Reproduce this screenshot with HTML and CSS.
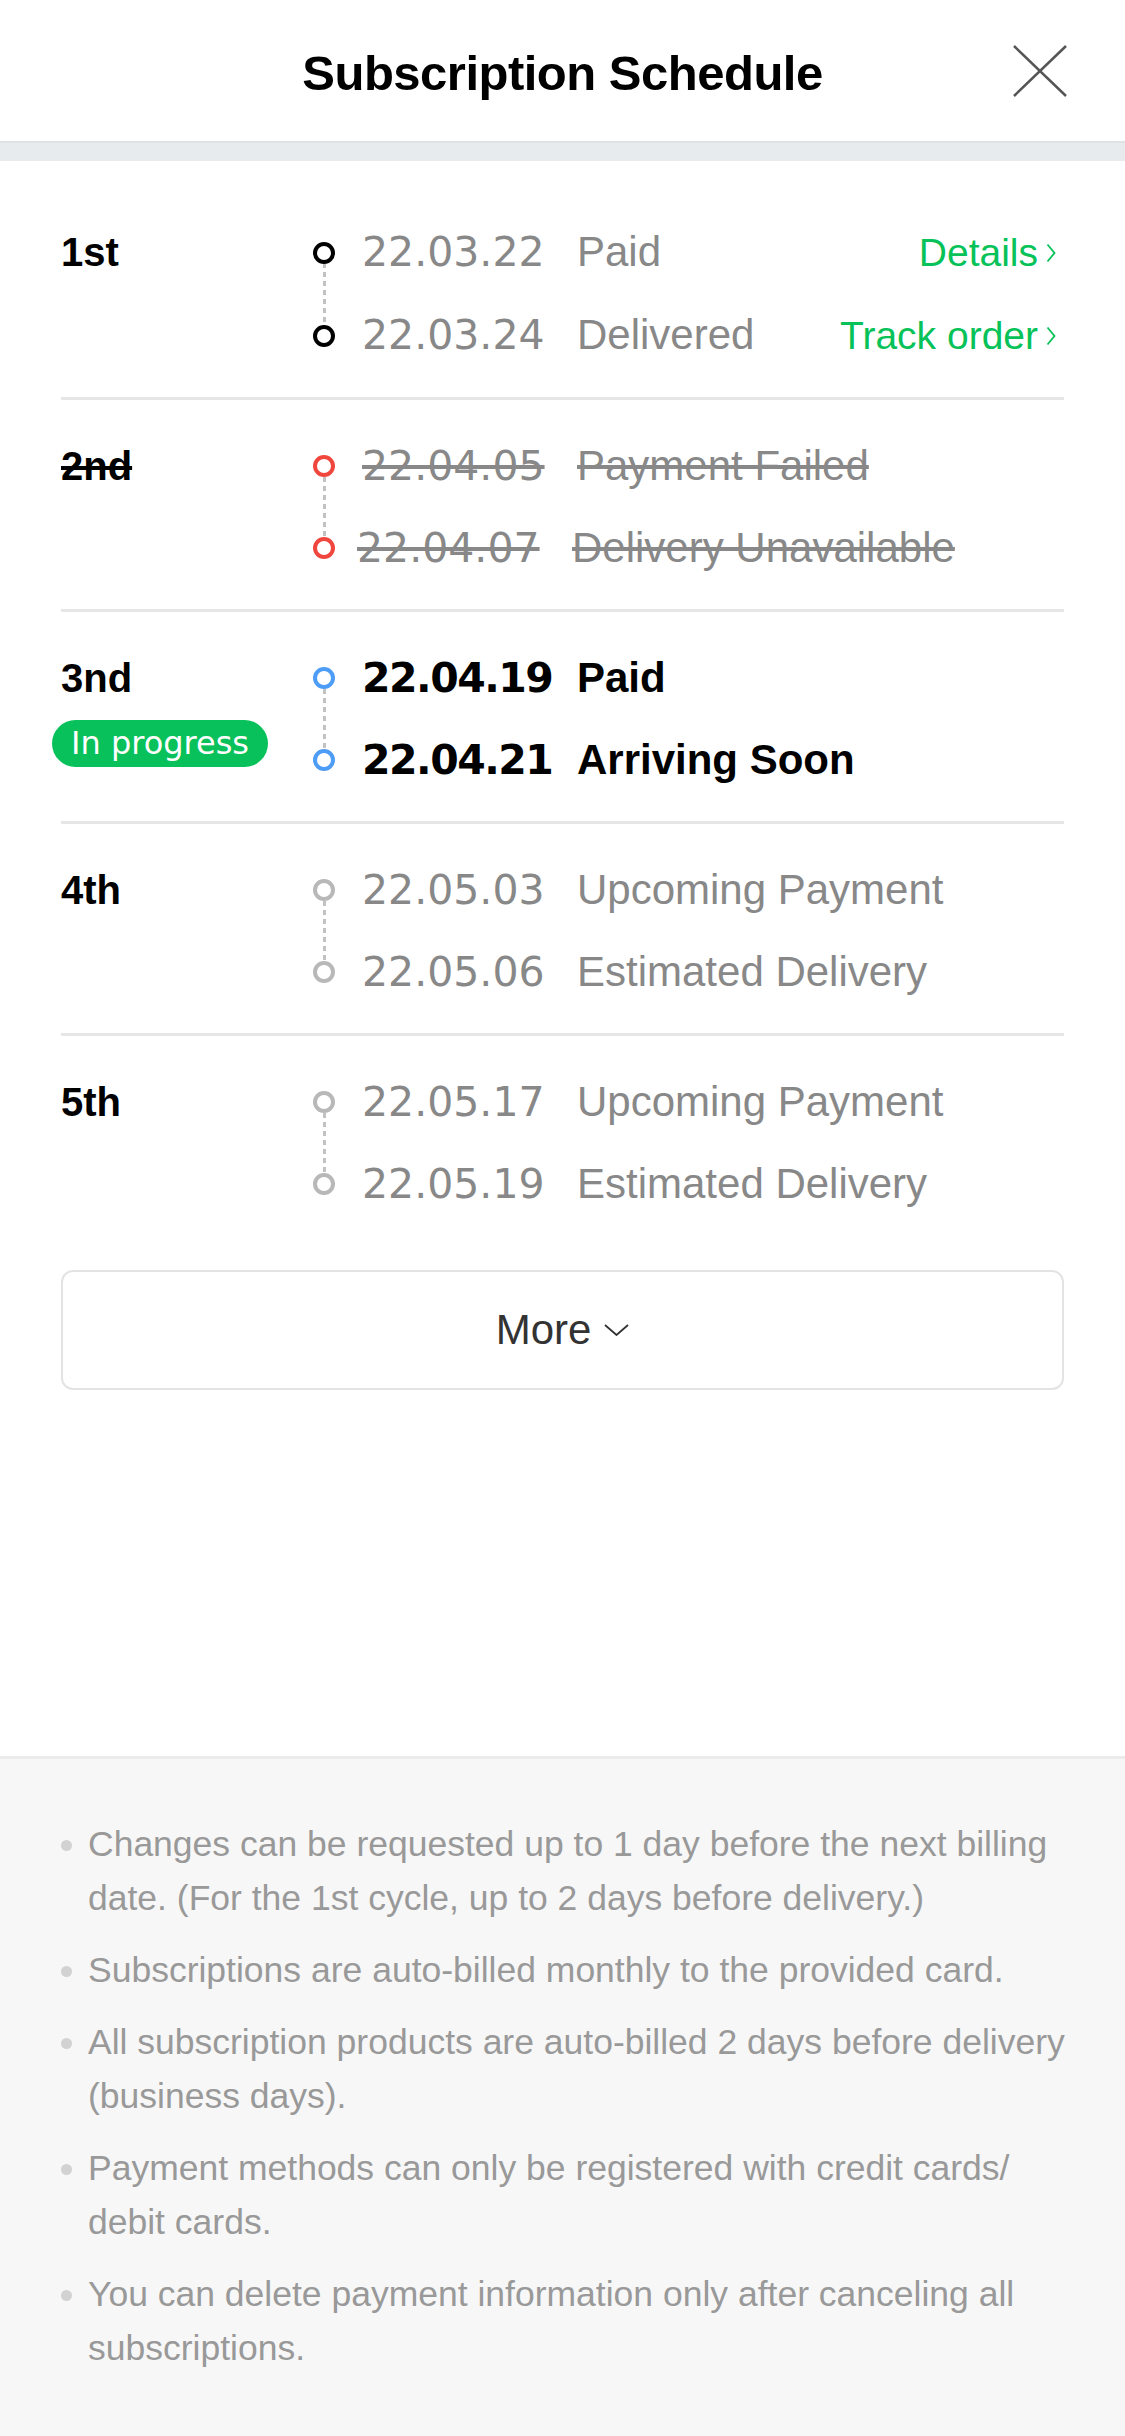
FILE: index.html
```html
<!DOCTYPE html>
<html lang="en">
<head>
    <meta charset="UTF-8">
    <meta name="viewport" content="width=device-width, initial-scale=1.0">
    <title>Subscription Schedule</title>
    <link rel="stylesheet" href="styles.css">
</head>
<body>

<header class="sheet-header">
    <h1>Subscription Schedule</h1>
    <button class="close" aria-label="Close">
        <svg width="54" height="52" viewBox="0 0 54 52"><path d="M1 1 L53 51 M53 1 L1 51" stroke="#555" stroke-width="2.5" fill="none"/></svg>
    </button>
</header>
<div class="band"></div>

<main class="schedule">
    <div class="cycle done">
        <div class="cycle-label">1st</div>
        <div class="timeline">
            <div class="step">
                <span class="dot"></span>
                <span class="date">22.03.22</span>
                <span class="status">Paid</span>
                <a class="link" href="#">Details<svg width="10" height="20" viewBox="0 0 10 20"><path d="M1.5 1.5 L8.5 10 L1.5 18.5" stroke="#06c258" stroke-width="1.8" fill="none"/></svg></a>
            </div>
            <div class="step">
                <span class="dot"></span>
                <span class="date">22.03.24</span>
                <span class="status">Delivered</span>
                <a class="link" href="#">Track order<svg width="10" height="20" viewBox="0 0 10 20"><path d="M1.5 1.5 L8.5 10 L1.5 18.5" stroke="#06c258" stroke-width="1.8" fill="none"/></svg></a>
            </div>
        </div>
    </div>

    <div class="cycle failed">
        <div class="cycle-label">2nd</div>
        <div class="timeline">
            <div class="step">
                <span class="dot"></span>
                <span class="date">22.04.05</span>
                <span class="status">Payment Failed</span>
            </div>
            <div class="step tight">
                <span class="dot"></span>
                <span class="date">22.04.07</span>
                <span class="status">Delivery Unavailable</span>
            </div>
        </div>
    </div>

    <div class="cycle current">
        <div class="cycle-label">3nd</div>
        <div class="badge">In progress</div>
        <div class="timeline">
            <div class="step">
                <span class="dot"></span>
                <span class="date">22.04.19</span>
                <span class="status">Paid</span>
            </div>
            <div class="step">
                <span class="dot"></span>
                <span class="date">22.04.21</span>
                <span class="status">Arriving Soon</span>
            </div>
        </div>
    </div>

    <div class="cycle upcoming">
        <div class="cycle-label">4th</div>
        <div class="timeline">
            <div class="step">
                <span class="dot"></span>
                <span class="date">22.05.03</span>
                <span class="status">Upcoming Payment</span>
            </div>
            <div class="step">
                <span class="dot"></span>
                <span class="date">22.05.06</span>
                <span class="status">Estimated Delivery</span>
            </div>
        </div>
    </div>

    <div class="cycle upcoming">
        <div class="cycle-label">5th</div>
        <div class="timeline">
            <div class="step">
                <span class="dot"></span>
                <span class="date">22.05.17</span>
                <span class="status">Upcoming Payment</span>
            </div>
            <div class="step">
                <span class="dot"></span>
                <span class="date">22.05.19</span>
                <span class="status">Estimated Delivery</span>
            </div>
        </div>
    </div>

    <button class="more">More <svg width="25" height="12" viewBox="0 0 25 12"><path d="M1 1 L12.5 11 L24 1" stroke="#333" stroke-width="1.8" fill="none"/></svg></button>
</main>

<section class="notes">
    <ul>
        <li>Changes can be requested up to 1 day before the next billing date. (For the 1st cycle, up to 2 days before delivery.)</li>
        <li>Subscriptions are auto-billed monthly to the provided card.</li>
        <li>All subscription products are auto-billed 2 days before delivery (business days).</li>
        <li>Payment methods can only be registered with credit cards/<wbr>debit cards.</li>
        <li>You can delete payment information only after canceling all subscriptions.</li>
    </ul>
</section>

</body>
</html>
```

FILE: styles.css
```css
body {
    margin: 0;
    min-height: 100vh;
    display: flex;
    flex-direction: column;
    font-family: "Liberation Sans", Arial, sans-serif;
    background-color: white;
    color: #000;
}
.sheet-header {
    height: 141px;
    box-sizing: border-box;
    padding-top: 4px;
    display: grid;
    grid-template-columns: 1fr auto 1fr;
    align-items: center;
}
.sheet-header h1 {
    grid-column: 2;
    margin: 0;
    font-size: 49px;
    letter-spacing: -0.5px;
    font-weight: bold;
}
.close {
    grid-column: 3;
    justify-self: end;
    margin-right: 58px;
    margin-top: -4px;
    padding: 0;
    border: none;
    background: none;
    display: flex;
}
.band {
    height: 20px;
    box-sizing: border-box;
    border-top: 2px solid #dfe1e3;
    background-color: #e8ebee;
}
.schedule {
    padding: 0 61px;
    display: flex;
    flex-direction: column;
}
.cycle {
    display: grid;
    grid-template-columns: 252px 1fr;
    grid-template-rows: auto 1fr;
    padding: 40px 0 35px;
    border-bottom: 3px solid #e6e6e6;
}
.cycle:first-child {
    padding-top: 65px;
}
.cycle:nth-last-child(2) {
    border-bottom: none;
}
.cycle-label {
    grid-column: 1;
    grid-row: 1;
    font-size: 40px;
    font-weight: bold;
    line-height: 52px;
}
.badge {
    grid-column: 1;
    grid-row: 2;
    justify-self: start;
    align-self: start;
    margin: 16px 0 0 -9px;
    height: 47px;
    padding: 0 19px;
    border-radius: 24px;
    background-color: #08c15a;
    color: white;
    font-family: "DejaVu Sans", sans-serif;
    font-size: 32px;
    line-height: 47px;
}
.timeline {
    grid-column: 2;
    grid-row: 1 / 3;
    position: relative;
    display: flex;
    flex-direction: column;
    gap: 30px;
}
.timeline::before {
    content: "";
    position: absolute;
    left: 10px;
    top: 37px;
    width: 3px;
    height: 60px;
    background: repeating-linear-gradient(to bottom, #c2c2c2 0 5px, transparent 5px 9px);
}
.step {
    display: flex;
    align-items: baseline;
    line-height: 52px;
}
.dot {
    align-self: center;
    flex: none;
    position: relative;
    width: 22px;
    height: 22px;
    box-sizing: border-box;
    border: 4px solid #000;
    border-radius: 50%;
    background-color: white;
    margin-right: 27px;
}
.step.tight .dot {
    margin-right: 22px;
}
.date {
    flex: none;
    width: 215px;
    font-family: "DejaVu Sans", sans-serif;
    font-size: 41px;
    color: #888;
}
.status {
    font-size: 42px;
    color: #888;
}
.link {
    margin-left: auto;
    margin-right: 8px;
    display: inline-flex;
    align-items: center;
    gap: 8px;
    font-size: 39px;
    color: #06c258;
    text-decoration: none;
}
.failed .dot {
    border-color: #f1463e;
}
.failed .cycle-label,
.failed .date,
.failed .status {
    text-decoration: line-through;
}
.current .dot {
    border-color: #4d9cf6;
}
.current .date {
    font-weight: bold;
    color: #000;
    letter-spacing: -1.5px;
}
.current .status {
    font-weight: bold;
    color: #000;
}
.upcoming .dot {
    border-color: #b8b8b8;
}
.more {
    margin-top: 25px;
    height: 120px;
    border: 2px solid #e3e3e3;
    border-radius: 12px;
    background-color: white;
    display: flex;
    align-items: center;
    justify-content: center;
    gap: 13px;
    font-family: "Liberation Sans", Arial, sans-serif;
    font-size: 42px;
    color: #333;
}
.notes {
    flex-grow: 1;
    margin-top: 366px;
    border-top: 3px solid #ebebeb;
    background-color: #f7f7f7;
    padding: 58px 52px 58px 61px;
}
.notes ul {
    margin: 0;
    padding: 0;
    list-style: none;
}
.notes li {
    position: relative;
    padding-left: 27px;
    margin-bottom: 18px;
    font-size: 35.5px;
    line-height: 54px;
    color: #999;
}
.notes li::before {
    content: "";
    position: absolute;
    left: 0;
    top: 23px;
    width: 11px;
    height: 11px;
    border-radius: 50%;
    background-color: #d2d2d2;
}
```
